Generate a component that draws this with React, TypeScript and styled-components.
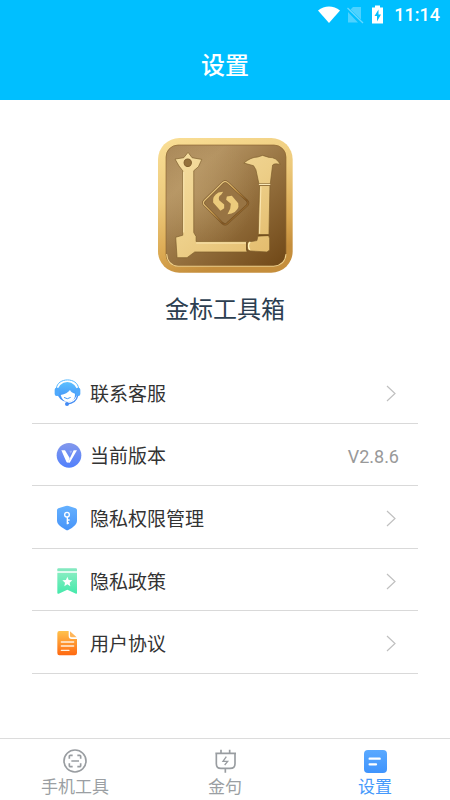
import React from "react";
import styled, { createGlobalStyle } from "styled-components";

const GlobalStyle = createGlobalStyle`
  *, *::before, *::after { box-sizing: border-box; }
  body {
    margin: 0;
    background: #fff;
    font-family: Roboto, "Noto Sans CJK SC", sans-serif;
  }
`;

const Page = styled.div`
  display: flex;
  flex-direction: column;
  min-height: 100vh;
`;

const Header = styled.header`
  background: #00bfff;
  color: #fff;
`;

const StatusBar = styled.div`
  display: flex;
  align-items: center;
  justify-content: flex-end;
  height: 30px;
  padding-right: 10px;
`;

const Clock = styled.time`
  margin-left: 7px;
  font-size: 18px;
  font-weight: 500;
  line-height: 32px;
`;

const Title = styled.h1`
  margin: 0;
  padding-top: 2px;
  font-size: 24px;
  font-weight: 500;
  line-height: 68px;
  text-align: center;
`;

const Main = styled.main`
  display: flex;
  flex-direction: column;
  flex: 1;
  padding: 38px 32px 0;
`;

const Brand = styled.section`
  display: flex;
  flex-direction: column;
  align-items: center;
`;

const AppName = styled.h2`
  margin: 17px 0 31px;
  color: #2c3e50;
  font-size: 24px;
  font-weight: 400;
  line-height: 40px;
`;

const List = styled.ul`
  display: grid;
  grid-auto-rows: 1fr;
  min-height: 313px;
  margin: 0;
  padding: 0;
  list-style: none;
`;

const Item = styled.li`
  display: flex;
  border-bottom: 1px solid #d9d9d9;
`;

const Row = styled.button`
  display: flex;
  flex: 1;
  align-items: center;
  gap: 8px;
  padding: 2px 19px 0 22px;
  border: 0;
  background: none;
  color: #333;
  font: inherit;
  font-size: 19px;
  line-height: 28px;
  text-align: left;
  cursor: pointer;
`;

const RowLabel = styled.span`
  flex: 1;
  padding-top: 4px;
`;

const Version = styled.span`
  padding-top: 3px;
  color: #999;
  font-size: 18px;
`;

const TabBar = styled.nav`
  display: grid;
  grid-template-columns: repeat(3, 1fr);
  height: 62px;
  border-top: 1px solid #dcdcdc;
`;

const Tab = styled.a<{ $active?: boolean }>`
  display: flex;
  flex-direction: column;
  align-items: center;
  padding-top: 8px;
  color: ${(p) => (p.$active ? "#4599fb" : "#9b9fa3")};
  font-size: 17px;
  line-height: 25px;
  text-decoration: none;
`;

const WifiIcon = () => (
  <svg width="24" height="30" viewBox="0 0 24 30" aria-hidden="true">
    <path d="M1 10.5C7.500 5 16.500 5 23 10.500L12 23Z" fill="#fff" />
  </svg>
);

const NoSimIcon = () => (
  <svg width="28" height="30" viewBox="0 0 28 30" aria-hidden="true">
    <path d="M12 7H20V19.500L9.500 9.500ZM7 12L17 22.500H7Z" fill="#fff" opacity="0.3" />
    <path d="M6.500 8L22 23" stroke="#fff" strokeWidth="1.300" opacity="0.4" />
  </svg>
);

const BatteryIcon = () => (
  <svg width="18" height="30" viewBox="0 0 18 30" aria-hidden="true">
    <path d="M6 5.500H11V7.500H14V23.500H3V7.500H6Z" fill="#fff" />
    <path d="M9.500 9.500L5.500 16H8V21.500L12 14.500H9.500Z" fill="#00bfff" />
  </svg>
);

const Logo = () => (
  <svg width="135" height="135" viewBox="24 23 404 404" role="img" aria-label="金标工具箱">
    <defs>
      <linearGradient id="rim" x1="0" y1="0" x2="0.3" y2="1">
        <stop offset="0" stopColor="#fadf96" />
        <stop offset="0.45" stopColor="#edca7c" />
        <stop offset="0.8" stopColor="#dba952" />
        <stop offset="1" stopColor="#c58e3c" />
      </linearGradient>
      <linearGradient id="panel" x1="0" y1="0" x2="0.9" y2="1">
        <stop offset="0" stopColor="#a88758" />
        <stop offset="0.25" stopColor="#b39261" />
        <stop offset="0.55" stopColor="#977341" />
        <stop offset="1" stopColor="#734b1a" />
      </linearGradient>
      <radialGradient id="sheen" cx="0.25" cy="0.4" r="0.5">
        <stop offset="0" stopColor="#c8aa76" stopOpacity="0.35" />
        <stop offset="1" stopColor="#c8aa76" stopOpacity="0" />
      </radialGradient>
      <linearGradient id="tool" gradientUnits="userSpaceOnUse" x1="80" y1="70" x2="360" y2="380">
        <stop offset="0" stopColor="#f5dda0" />
        <stop offset="0.5" stopColor="#edcf89" />
        <stop offset="1" stopColor="#e3bb6c" />
      </linearGradient>
      <linearGradient id="diamond" x1="0" y1="0" x2="1" y2="1">
        <stop offset="0" stopColor="#ffe9a9" />
        <stop offset="0.45" stopColor="#c99d51" />
        <stop offset="0.7" stopColor="#805522" />
        <stop offset="1" stopColor="#d0a458" />
      </linearGradient>
    </defs>
    <rect x="24" y="23" width="403" height="403" rx="64" fill="url(#rim)" />
    <rect x="48" y="44" width="359" height="363" rx="36" fill="url(#panel)" stroke="#8b652e" strokeWidth="2" />
    <rect x="50" y="46" width="355" height="359" rx="34" fill="url(#sheen)" />
    <path d="M50 370Q52 404 84 407H370Q405 403 407 370" fill="none" stroke="#f2d28a" strokeWidth="3" />
    <g fill="url(#tool)" stroke="#7d5d2c" strokeWidth="2" strokeLinejoin="round">
      <path d="M75 86L101 82L114 66L126 82L155 87L145 109L131 121V306L138 318V333H290V364H134L111 381H81L77 320L98 314V121L87 107Z" />
      <path d="M326 160L317 118L310 106L281 98Q302 80 322 80L337 75L356 81Q378 80 390 102Q372 98 367 104L360 160Z" />
      <path d="M328 165H359L356 312H324Z" />
      <path d="M323 317L355 315L358 324V358L350 364L300 361L291 356V335L320 330Z" />
    </g>
    <path d="M101 125V306M138 337H288M332 168L328 309" stroke="#fbe7b3" strokeWidth="3" fill="none" />
    <circle cx="113" cy="97" r="11" fill="#94713c" stroke="#805d2d" strokeWidth="3" />
    <path d="M326 162H360" stroke="#fff0c0" strokeWidth="3" />
    <path d="M324 314H356" stroke="#704b19" strokeWidth="3" />
    <path d="M300 334Q290 345 299 358" stroke="#fff2bb" strokeWidth="4" fill="none" />
    <path d="M290 334V360" stroke="#5b3a10" strokeWidth="3" />
    <path d="M217 157Q225 149 233 157L290 210Q297 217 290 225L232 278Q225 285 217 278L164 225Q156 217 164 209Z" fill="#987443" stroke="#735125" strokeWidth="7" />
    <path d="M217 157Q225 149 233 157L290 210Q297 217 290 225L232 278Q225 285 217 278L164 225Q156 217 164 209Z" fill="none" stroke="url(#diamond)" strokeWidth="4" />
    <path d="M219 184L205 186Q186 196 189 216L211 241L222 233V222L207 209Q203 199 213 193ZM230 198L245 196L264 218Q269 239 244 249L232 251L240 235L242 220L228 208Z" fill="#eccb7c" />
  </svg>
);

const SupportIcon = () => (
  <svg width="28" height="28" viewBox="72 28 84 84" aria-hidden="true">
    <defs>
      <linearGradient id="support" x1="0" y1="0" x2="0" y2="1">
        <stop offset="0" stopColor="#5cc0ff" />
        <stop offset="1" stopColor="#3f89f5" />
      </linearGradient>
    </defs>
    <path d="M79 57C82 22 143 22 146 57" fill="none" stroke="#55b8ff" strokeWidth="3" />
    <circle cx="112" cy="67" r="30" fill="url(#support)" />
    <rect x="74" y="54" width="14" height="25" rx="6" fill="#4fa9fc" />
    <rect x="137" y="54" width="14" height="25" rx="6" fill="#4fa9fc" />
    <path d="M92 76Q111 73 120 61Q123 69 135 72Q137 95 114 97Q98 97 92 76Z" fill="#fff" />
    <path d="M103 84Q112 91 121 84" stroke="#459af8" strokeWidth="3" fill="none" strokeLinecap="round" />
    <path d="M143 78Q138 101 111 103" stroke="#458ef4" strokeWidth="4" fill="none" />
    <circle cx="111" cy="103" r="6" fill="#428af4" />
  </svg>
);

const VersionIcon = () => (
  <svg width="28" height="28" viewBox="72 214 84 84" aria-hidden="true">
    <defs>
      <linearGradient id="version" x1="0" y1="0" x2="0" y2="1">
        <stop offset="0" stopColor="#8398ec" />
        <stop offset="1" stopColor="#5180fc" />
      </linearGradient>
    </defs>
    <circle cx="117" cy="257" r="37" fill="url(#version)" />
    <path d="M94 242H105L119 265L114 278Q112 281 109 276ZM131 242H141L120 278Q118 281 114 278Z" fill="#fff" />
    <path d="M118 243H127L122 252Z" fill="#e0e7ff" opacity="0.4" />
  </svg>
);

const ShieldIcon = () => (
  <svg width="28" height="28" viewBox="72 43 84 84" aria-hidden="true">
    <defs>
      <linearGradient id="shield" x1="0" y1="0" x2="0" y2="1">
        <stop offset="0" stopColor="#65b1ff" />
        <stop offset="1" stopColor="#4794f8" />
      </linearGradient>
    </defs>
    <path d="M107 49Q111 47 116 49L137 56Q141 58 141 62V94Q141 108 116 120Q112 123 107 120Q81 107 81 94V62Q81 58 85 56Z" fill="url(#shield)" />
    <circle cx="111" cy="75" r="7" fill="none" stroke="#fff" strokeWidth="4" />
    <path d="M112 82V104M112 91H119M112 100H117" fill="none" stroke="#fff" strokeWidth="4" />
  </svg>
);

const PolicyIcon = () => (
  <svg width="28" height="28" viewBox="72 229 84 84" aria-hidden="true">
    <defs>
      <linearGradient id="policy" x1="0" y1="0" x2="0" y2="1">
        <stop offset="0" stopColor="#86edc1" />
        <stop offset="1" stopColor="#45e9ab" />
      </linearGradient>
    </defs>
    <path d="M82 236Q82 233 85 233H138Q141 233 141 236V242H82Z" fill="#83e9c0" />
    <path d="M82 246H141V307Q141 310 138 309L112 297L86 309Q82 310 82 307Z" fill="url(#policy)" />
    <path d="M112 258L116 268L127 269L119 276L121 287L112 281L103 287L105 276L97 269L108 268Z" fill="#fff" />
  </svg>
);

const AgreementIcon = () => (
  <svg width="28" height="28" viewBox="72 416 84 84" aria-hidden="true">
    <defs>
      <linearGradient id="agreement" x1="0" y1="0" x2="0" y2="1">
        <stop offset="0" stopColor="#ffc24d" />
        <stop offset="1" stopColor="#ff6810" />
      </linearGradient>
    </defs>
    <path d="M88 422H116V437Q116 446 125 446H141V488Q141 495 134 495H88Q82 495 82 488V429Q82 422 88 422Z" fill="url(#agreement)" />
    <path d="M120 423L140 441H125Q120 441 120 436Z" fill="#ffb65a" />
    <path d="M94 455H131M94 467H131M94 480H117" stroke="#fff0df" strokeWidth="4" strokeLinecap="round" />
  </svg>
);

const Chevron = () => (
  <svg width="14" height="18" viewBox="0 0 14 18" fill="none" aria-hidden="true">
    <path d="M2 2L10 9.500L2 17" stroke="#c0c0c0" strokeWidth="1.200" />
  </svg>
);

const ToolsIcon = () => (
  <svg width="28" height="28" viewBox="183 51 84 84" fill="none" stroke="#999da1" strokeWidth="5" aria-hidden="true">
    <circle cx="225" cy="93" r="33" />
    <path d="M208 86V78Q208 76 211 76H218M232 76H239Q242 76 242 79V86M208 100V107Q208 110 211 110H218M232 110H239Q242 110 242 107V100M214 93H237" />
  </svg>
);

const PlugIcon = () => (
  <svg width="28" height="28" viewBox="633 51 84 84" fill="none" stroke="#999da1" strokeWidth="5" aria-hidden="true">
    <path d="M646 70H708M649 71V101Q649 115 663 115H690Q705 115 705 101V71M663 59V70M689 59V70M676 115V128" />
    <path d="M679 80L669 94H683L674 105" strokeWidth="4" />
  </svg>
);

const SettingsIcon = () => (
  <svg width="28" height="28" viewBox="1083 51 84 84" aria-hidden="true">
    <defs>
      <linearGradient id="settings" x1="0" y1="0" x2="0" y2="1">
        <stop offset="0" stopColor="#5aa9ff" />
        <stop offset="1" stopColor="#3f94fd" />
      </linearGradient>
    </defs>
    <rect x="1092" y="60" width="69" height="69" rx="12" fill="url(#settings)" />
    <path d="M1109 86H1139M1109 103H1128" stroke="#fff" strokeWidth="7" strokeLinecap="round" />
  </svg>
);

const entries = [
  { label: "联系客服", Icon: SupportIcon },
  { label: "当前版本", Icon: VersionIcon, value: "V2.8.6" },
  { label: "隐私权限管理", Icon: ShieldIcon },
  { label: "隐私政策", Icon: PolicyIcon },
  { label: "用户协议", Icon: AgreementIcon },
];

const tabs = [
  { label: "手机工具", href: "#tools", Icon: ToolsIcon },
  { label: "金句", href: "#quotes", Icon: PlugIcon },
  { label: "设置", href: "#settings", Icon: SettingsIcon, active: true },
];

export default function App() {
  return (
    <Page lang="zh-CN">
      <GlobalStyle />
      <Header>
        <StatusBar>
          <WifiIcon />
          <NoSimIcon />
          <BatteryIcon />
          <Clock>11:14</Clock>
        </StatusBar>
        <Title>设置</Title>
      </Header>
      <Main>
        <Brand>
          <Logo />
          <AppName>金标工具箱</AppName>
        </Brand>
        <List>
          {entries.map(({ label, Icon, value }) => (
            <Item key={label}>
              <Row type="button">
                <Icon />
                <RowLabel>{label}</RowLabel>
                {value ? <Version>{value}</Version> : <Chevron />}
              </Row>
            </Item>
          ))}
        </List>
      </Main>
      <TabBar>
        {tabs.map(({ label, href, Icon, active }) => (
          <Tab key={label} href={href} $active={active} aria-current={active ? "page" : undefined}>
            <Icon />
            {label}
          </Tab>
        ))}
      </TabBar>
    </Page>
  );
}
